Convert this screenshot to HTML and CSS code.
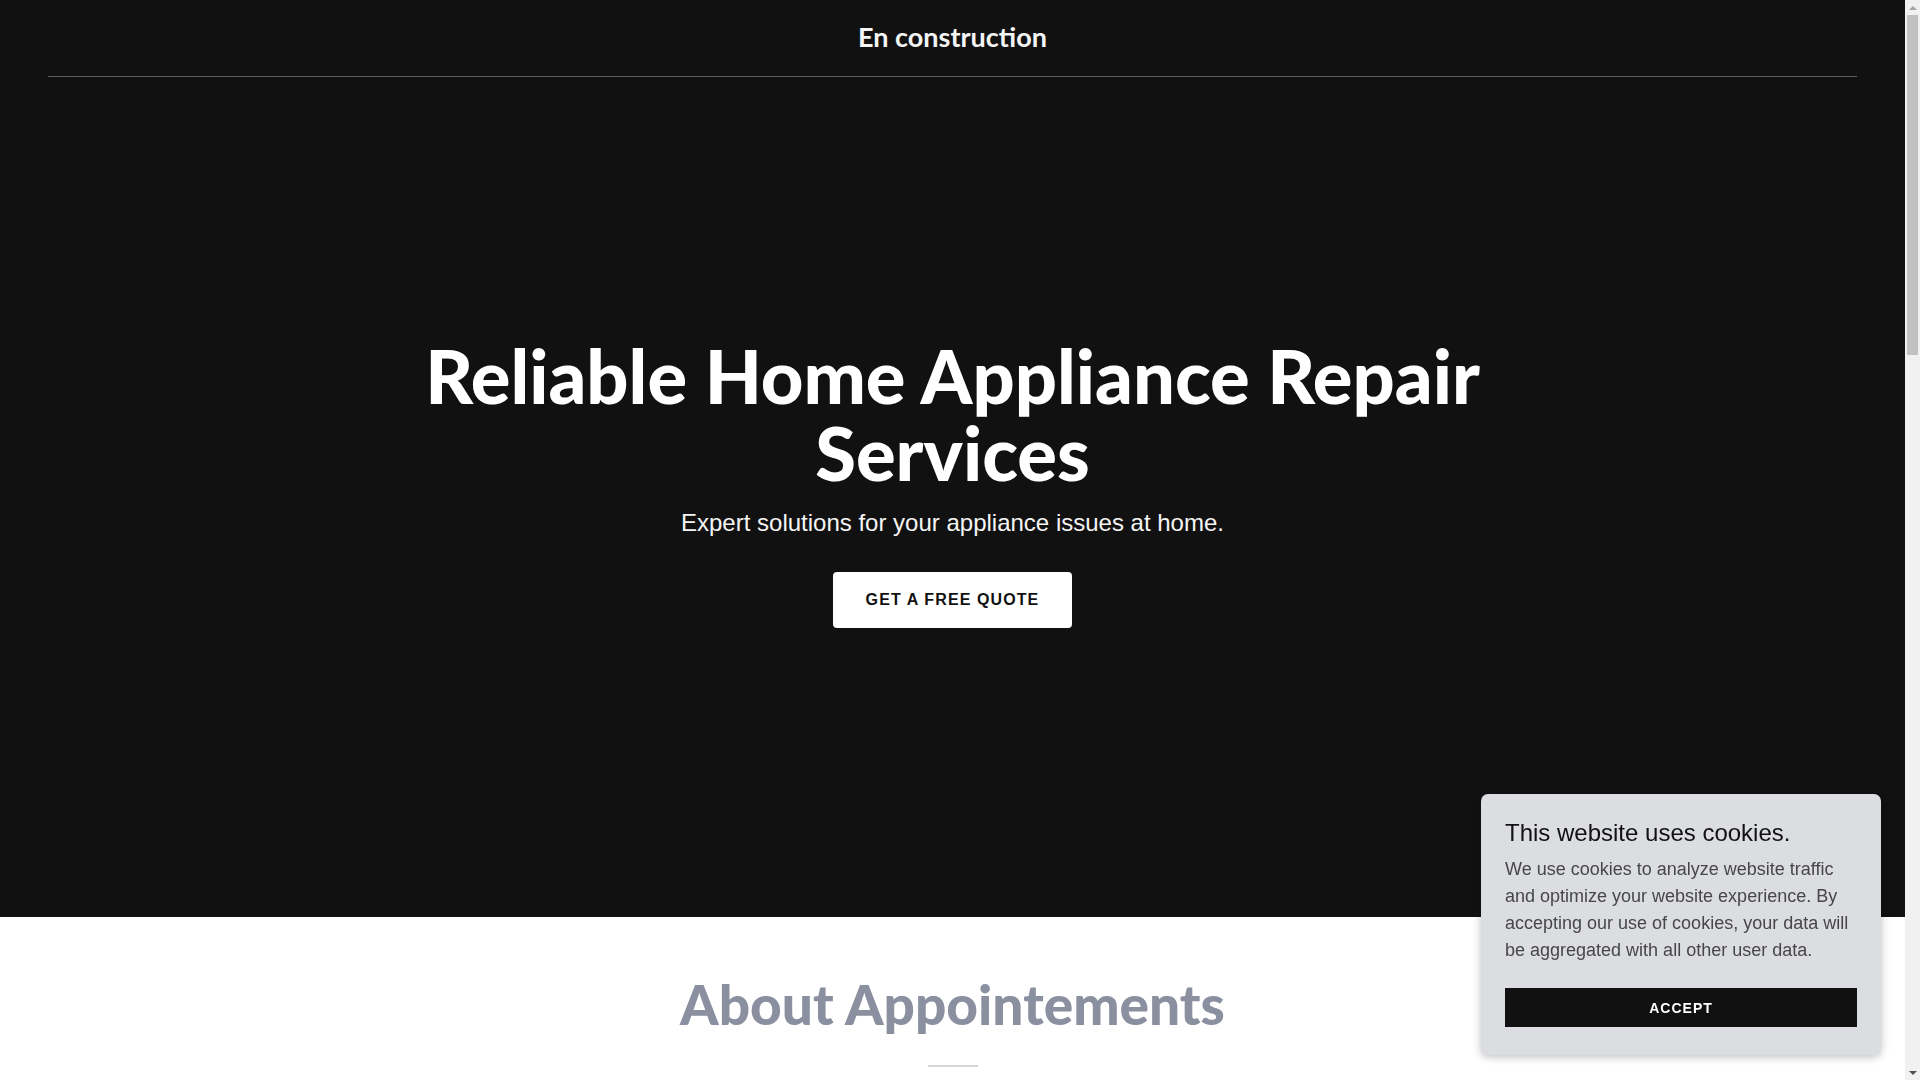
FILE: index.html
```html
<!DOCTYPE html>
<html lang="en">
<head>
<meta charset="utf-8">
<title>En construction</title>
<link rel="stylesheet" href="styles.css">
</head>
<body>
<div class="page">
  <header class="site-header">
    <div class="brand">En construction</div>
  </header>
  <section class="hero">
    <h1 class="hero-title">Reliable Home Appliance Repair Services</h1>
    <p class="hero-sub">Expert solutions for your appliance issues at home.</p>
    <a class="hero-btn" href="#">GET A FREE QUOTE</a>
  </section>
  <section class="about">
    <h2 class="about-title">About Appointements</h2>
    <div class="about-rule"></div>
  </section>
</div>
<div class="cookie">
  <h3 class="cookie-title">This website uses cookies.</h3>
  <p class="cookie-text">We use cookies to analyze website traffic and optimize your website experience. By accepting our use of cookies, your data will be aggregated with all other user data.</p>
  <a class="cookie-btn" href="#">ACCEPT</a>
</div>
<div class="scrollbar">
  <div class="sb-arrow sb-up"></div>
  <div class="sb-track"><div class="sb-thumb"></div></div>
  <div class="sb-arrow sb-down"></div>
</div>
</body>
</html>
```
FILE: styles.css
```css
* { box-sizing: border-box; }
html, body { margin: 0; padding: 0; }
body {
  background: #ffffff;
  font-family: "Liberation Sans", Arial, sans-serif;
  margin-right: 15px;
  overflow: hidden;
  height: 1080px;
}
.page { display: flex; flex-direction: column; }
.site-header {
  background: #111111;
  padding: 0 48px;
}
.brand {
  height: 77px;
  border-bottom: 1px solid #5e5e5e;
  color: #f5f5f5;
  font-family: "Lato", sans-serif;
  font-weight: 700;
  font-size: 27px;
  line-height: 74px;
  text-align: center;
}
.hero {
  background: #111111;
  height: 840px;
  display: flex;
  flex-direction: column;
  align-items: center;
  padding-top: 260px;
}
.hero-title {
  margin: 0;
  width: 1100px;
  color: #ffffff;
  font-family: "Lato", sans-serif;
  font-weight: 900;
  font-size: 74px;
  line-height: 77px;
  text-align: center;
}
.hero-sub {
  margin: 14px 0 0;
  color: #f5f5f5;
  font-size: 24px;
  line-height: 36px;
}
.hero-btn {
  margin-top: 31px;
  width: 239px;
  height: 56px;
  display: flex;
  align-items: center;
  justify-content: center;
  background: #ffffff;
  color: #111111;
  border-radius: 4px;
  font-weight: 700;
  font-size: 16px;
  letter-spacing: 1.1px;
  text-decoration: none;
}
.about {
  display: flex;
  flex-direction: column;
  align-items: center;
  padding-top: 53px;
}
.about-title {
  margin: 0;
  color: #8b90a0;
  font-family: "Lato", sans-serif;
  font-weight: 900;
  font-size: 55px;
  line-height: 68px;
}
.about-rule {
  margin-top: 27px;
  width: 50px;
  height: 2px;
  background: #d6d6d6;
}
.cookie {
  position: fixed;
  right: 39px;
  bottom: 25px;
  width: 400px;
  padding: 24px 24px 28px;
  background: #dcdde1;
  border-radius: 7px;
  box-shadow: 0 2px 8px rgba(0,0,0,0.25);
}
.cookie-title {
  margin: 0;
  color: #111111;
  font-weight: 400;
  font-size: 24px;
  line-height: 30px;
}
.cookie-text {
  margin: 8px 0 0;
  color: #474747;
  font-size: 18px;
  line-height: 27px;
}
.cookie-btn {
  margin-top: 24px;
  height: 39px;
  display: flex;
  align-items: center;
  justify-content: center;
  background: #111111;
  color: #ffffff;
  font-weight: 700;
  font-size: 14px;
  letter-spacing: 1px;
  text-decoration: none;
}
.scrollbar {
  position: fixed;
  top: 0;
  right: 0;
  width: 15px;
  height: 1080px;
  background: #f1f1f1;
  display: flex;
  flex-direction: column;
}
.sb-arrow {
  height: 15px;
  display: flex;
  align-items: center;
  justify-content: center;
}
.sb-up::before {
  content: "";
  border-left: 4px solid transparent;
  border-right: 4px solid transparent;
  border-bottom: 4px solid #a3a3a3;
}
.sb-down::before {
  content: "";
  border-left: 4px solid transparent;
  border-right: 4px solid transparent;
  border-top: 4px solid #505050;
}
.sb-track {
  flex: 1;
  padding: 0 2px;
}
.sb-thumb {
  height: 340px;
  background: #c1c1c1;
}
```
